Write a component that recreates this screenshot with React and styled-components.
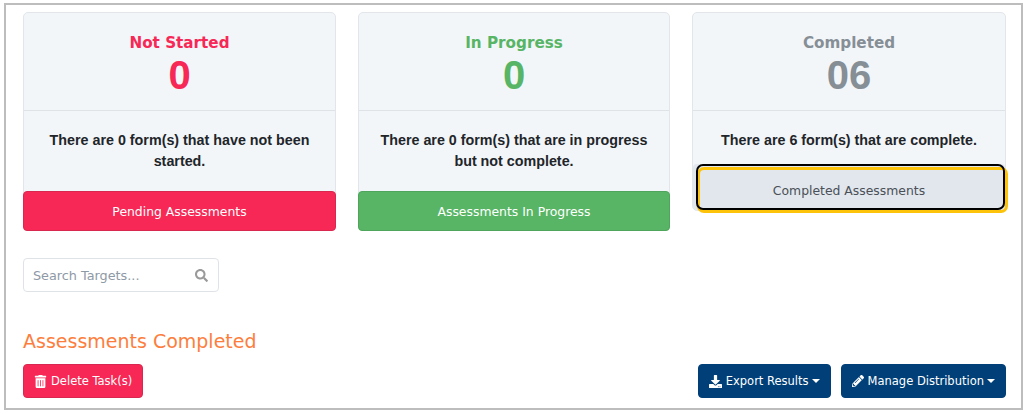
import React from "react";
import styled, { createGlobalStyle } from "styled-components";
import { FaDownload, FaPencilAlt, FaSearch, FaTrashAlt } from "react-icons/fa";

const GlobalStyle = createGlobalStyle`
  html, body {
    margin: 0;
    padding: 0;
    background: #fff;
    font-family: "DejaVu Sans", Verdana, sans-serif;
  }
`;

const Frame = styled.div`
  box-sizing: border-box;
  width: 1019px;
  height: 407px;
  margin: 3px 0 0 4px;
  padding: 7px 15px 0 17px;
  border: 2px solid #bdbdbd;
  background: #fff;
  overflow: hidden;
`;

const Cards = styled.div`
  display: grid;
  grid-template-columns: 313px 312px 314px;
  column-gap: 22px;
  align-items: start;
`;

const Card = styled.div`
  display: flex;
  flex-direction: column;
  box-sizing: border-box;
  height: ${(p) => p.$height}px;
  background: #f3f6f9;
  border: 1px solid #e2e6ea;
  border-radius: 5px;
`;

const CardHead = styled.div`
  box-sizing: border-box;
  height: 98px;
  padding-top: 21px;
  border-bottom: 1px solid #dfe3e8;
  text-align: center;
  color: ${(p) => p.$color};
`;

const Status = styled.div`
  font-size: 15.2px;
  font-weight: 700;
  line-height: 18px;
`;

const Count = styled.div`
  font-family: "Liberation Sans", Arial, sans-serif;
  font-size: 40px;
  font-weight: 700;
  line-height: 46px;
`;

const CardBody = styled.p`
  flex: 1;
  margin: 0;
  padding: 19px 20px 0;
  font-family: "Liberation Sans", Arial, sans-serif;
  font-size: 14.3px;
  font-weight: 700;
  line-height: 21px;
  text-align: center;
  color: #212529;
`;

const CardButton = styled.button`
  flex: none;
  box-sizing: border-box;
  width: calc(100% + 2px);
  height: 40px;
  margin: 0 -1px -1px;
  padding: 0;
  font-family: inherit;
  font-size: 12.4px;
  color: #fff;
  background: ${(p) => p.$bg};
  border: 1px solid ${(p) => p.$edge};
  border-radius: 4px;
`;

/* focused button: the browser's yellow ring sits off the black one */
const FocusButton = styled(CardButton)`
  position: relative;
  width: 100%;
  height: 46px;
  margin: 0;
  padding-top: 6px;
  color: #495057;
  border: 0;
  &::before,
  &::after {
    content: "";
    position: absolute;
    box-sizing: border-box;
    border-radius: 7px;
  }
  &::before {
    inset: 3px -3px -3px 4px;
    border: 3px solid #fdc20a;
  }
  &::after {
    inset: 0 0 0 3px;
    border: 2px solid #000;
  }
`;

const SearchBox = styled.div`
  display: flex;
  align-items: center;
  justify-content: space-between;
  box-sizing: border-box;
  width: 196px;
  height: 34px;
  margin-top: 27px;
  padding: 0 10px 0 9px;
  border: 1px solid #dfe3e8;
  border-radius: 4px;
  font-size: 12.8px;
  color: #8e99a6;
  svg {
    width: 13px;
    height: 13px;
    color: #9a9a9a;
  }
`;

const Heading = styled.h2`
  margin: 37px 0 0;
  font-size: 19px;
  font-weight: 400;
  line-height: 24px;
  color: #fd7e3c;
`;

const Toolbar = styled.div`
  display: flex;
  align-items: center;
  justify-content: space-between;
  margin-top: 11px;
`;

const ButtonGroup = styled.div`
  display: flex;
  gap: 10px;
`;

const ActionButton = styled.button`
  display: inline-flex;
  align-items: center;
  gap: 4px;
  box-sizing: border-box;
  height: 34px;
  padding: 0 10px;
  font-family: inherit;
  font-size: 11.5px;
  color: #fff;
  background: ${(p) => p.$bg};
  border: 1px solid ${(p) => p.$edge};
  border-radius: 4px;
  svg {
    width: ${(p) => p.$icon}px;
    height: ${(p) => p.$icon}px;
  }
`;

const Caret = styled.span`
  width: 0;
  height: 0;
  margin-left: -1px;
  border-top: 4px solid #fff;
  border-left: 4px solid transparent;
  border-right: 4px solid transparent;
`;

const cards = [
  { title: "Not Started", count: "0", color: "#f72856", text: "There are 0 form(s) that have not been started.", button: "Pending Assessments", bg: "#f72856", edge: "#d9284f" },
  { title: "In Progress", count: "0", color: "#57b565", text: "There are 0 form(s) that are in progress but not complete.", button: "Assessments In Progress", bg: "#57b565", edge: "#4ea55b" },
];

export default function App() {
  return (
    <>
      <GlobalStyle />
      <Frame>
        <Cards>
          {cards.map((c) => (
            <Card key={c.title} $height={219}>
              <CardHead $color={c.color}>
                <Status>{c.title}</Status>
                <Count>{c.count}</Count>
              </CardHead>
              <CardBody>{c.text}</CardBody>
              <CardButton $bg={c.bg} $edge={c.edge}>{c.button}</CardButton>
            </Card>
          ))}
          <Card $height={199}>
            <CardHead $color="#868e96">
              <Status>Completed</Status>
              <Count>06</Count>
            </CardHead>
            <CardBody>There are 6 form(s) that are complete.</CardBody>
            <FocusButton $bg="#e2e6ed" $edge="#000">Completed Assessments</FocusButton>
          </Card>
        </Cards>
        <SearchBox>
          Search Targets...
          <FaSearch />
        </SearchBox>
        <Heading>Assessments Completed</Heading>
        <Toolbar>
          <ActionButton $bg="#f72856" $edge="#d9284f" $icon={13}>
            <FaTrashAlt />
            Delete Task(s)
          </ActionButton>
          <ButtonGroup>
            <ActionButton $bg="#003f77" $edge="#003f77" $icon={13}>
              <FaDownload />
              Export Results
              <Caret />
            </ActionButton>
            <ActionButton $bg="#003f77" $edge="#003f77" $icon={12}>
              <FaPencilAlt />
              Manage Distribution
              <Caret />
            </ActionButton>
          </ButtonGroup>
        </Toolbar>
      </Frame>
    </>
  );
}
